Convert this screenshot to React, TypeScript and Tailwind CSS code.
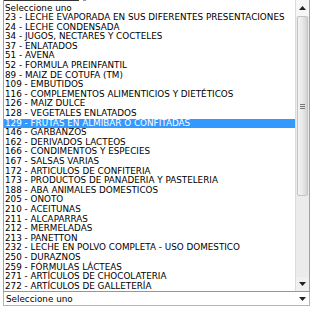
import React from "react";

const items = [
  "Seleccione uno",
  "23 - LECHE EVAPORADA EN SUS DIFERENTES PRESENTACIONES",
  "24 - LECHE CONDENSADA",
  "34 - JUGOS, NECTARES Y COCTELES",
  "37 - ENLATADOS",
  "51 - AVENA",
  "52 - FORMULA PREINFANTIL",
  "89 - MAIZ DE COTUFA (TM)",
  "109 - EMBUTIDOS",
  "116 - COMPLEMENTOS ALIMENTICIOS Y DIETÉTICOS",
  "126 - MAIZ DULCE",
  "128 - VEGETALES ENLATADOS",
  "129 - FRUTAS EN ALMIBAR O CONFITADAS",
  "146 - GARBANZOS",
  "162 - DERIVADOS LACTEOS",
  "166 - CONDIMENTOS Y ESPECIES",
  "167 - SALSAS VARIAS",
  "172 - ARTICULOS DE CONFITERIA",
  "173 - PRODUCTOS DE PANADERIA Y PASTELERIA",
  "188 - ABA ANIMALES DOMESTICOS",
  "205 - ONOTO",
  "210 - ACEITUNAS",
  "211 - ALCAPARRAS",
  "212 - MERMELADAS",
  "213 - PANETTON",
  "232 - LECHE EN POLVO COMPLETA - USO DOMESTICO",
  "250 - DURAZNOS",
  "259 - FÓRMULAS LÁCTEAS",
  "271 - ARTÍCULOS DE CHOCOLATERIA",
  "272 - ARTÍCULOS DE GALLETERÍA",
];

function UpArrow() {
  return (
    <svg width="7" height="4" viewBox="0 0 7 4">
      <path d="M3.5 0 L7 4 L0 4 Z" fill="#222" />
    </svg>
  );
}
function DownArrow() {
  return (
    <svg width="7" height="4" viewBox="0 0 7 4">
      <path d="M0 0 L7 0 L3.5 4 Z" fill="#222" />
    </svg>
  );
}

export default function App() {
  return (
    <div className="w-[317px] h-[310px] bg-white overflow-hidden font-['DejaVu_Sans',sans-serif] text-[8.8px] text-black">
      <div className="ml-[3px] w-[307px] h-[292px] border-l border-r border-b border-l-[#a0a0a0] border-r-[#a0a0a0] border-b-[#7f9db9] relative flex">
        <div className="absolute left-0 top-0 h-px w-[75px] bg-[#333]" />
        <div className="absolute left-[79px] top-0 h-px w-[3px] bg-[#999]" />
        <div className="flex-1 pt-[3.5px] flex flex-col">
          {items.map((t, i) => (
            <div
              key={i}
              className={
                "h-[9.6px] leading-[9.6px] pl-[1px] whitespace-nowrap " +
                (i === 12 ? "bg-[#3399ff] text-white" : "")
              }
            >
              {t}
            </div>
          ))}
        </div>
        <div className="w-[14px] flex flex-col bg-[#ebebeb] border-l border-[#dcdcdc]">
          <div className="h-[16px] flex items-center justify-center bg-[#f6f6f6]">
            <UpArrow />
          </div>
          <div className="mx-[1px] h-[180px] bg-gradient-to-r from-[#f4f4f4] via-[#e8e8e8] to-[#d4d4d4] border border-[#c4c4c4] rounded-[2px] flex items-center justify-center">
            <div className="flex flex-col gap-[1px]">
              <div className="w-[5px] h-px bg-[#777]" />
              <div className="w-[5px] h-px bg-[#777]" />
              <div className="w-[5px] h-px bg-[#777]" />
            </div>
          </div>
          <div className="flex-1" />
          <div className="h-[14px] flex items-center justify-center bg-[#f0f0f0]">
            <DownArrow />
          </div>
        </div>
      </div>
      <div className="ml-[3px] w-[307px] h-[14px] border-l border-r border-b border-[#a8b8c8] flex items-center">
        <div className="flex-1 pl-[2px] leading-[12px]">Seleccione uno</div>
        <div className="w-[14px] flex items-center justify-center">
          <DownArrow />
        </div>
      </div>
    </div>
  );
}
